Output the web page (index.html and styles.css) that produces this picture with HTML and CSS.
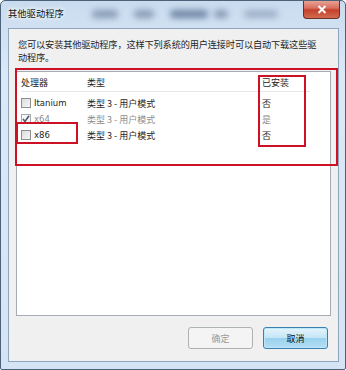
FILE: index.html
```html
<!DOCTYPE html>
<html>
<head>
<meta charset="utf-8">
<link rel="stylesheet" href="styles.css">
</head>
<body>
<div class="window">
  <div class="titlebar">
    <span class="title">其他驱动程序</span>
    <span class="blur b1"></span><span class="blur b2"></span><span class="blur b3"></span><span class="blur b4"></span><span class="blur b5"></span>
    <div class="close"><svg width="10" height="9" viewBox="0 0 10 9"><path d="M1.5 1 L8.5 8 M8.5 1 L1.5 8" stroke="#fff" stroke-width="2"/></svg></div>
  </div>
  <div class="client">
    <p class="intro">您可以安装其他驱动程序，这样下列系统的用户连接时可以自动下载这些驱动程序。</p>
    <div class="listbox">
      <div class="row head">
        <span class="c1">处理器</span><span class="c2">类型</span><span class="c3">已安装</span>
      </div>
      <div class="row">
        <span class="c1"><span class="cb"></span>Itanium</span><span class="c2">类型 3 - 用户模式</span><span class="c3">否</span>
      </div>
      <div class="row dis">
        <span class="c1"><span class="cb checked"><svg width="8" height="8" viewBox="0 0 8 8"><path d="M1 4 L3 6.5 L7 0.8" fill="none" stroke="#4a5a78" stroke-width="1.6"/></svg></span>x64</span><span class="c2">类型 3 - 用户模式</span><span class="c3">是</span>
      </div>
      <div class="row">
        <span class="c1"><span class="cb"></span>x86</span><span class="c2">类型 3 - 用户模式</span><span class="c3">否</span>
      </div>
    </div>
    <div class="buttons">
      <span class="btn disabled">确定</span>
      <span class="btn default">取消</span>
    </div>
  </div>
  <div class="mark m-big"></div>
  <div class="mark m-x86"></div>
  <div class="mark m-inst"></div>
</div>
</body>
</html>
```
FILE: styles.css
```css
html, body {
  margin: 0;
  padding: 0;
  background: #fff;
}
body {
  font-family: "Noto Sans CJK SC", "DejaVu Sans", sans-serif;
  font-size: 9px;
  color: #1e1e1e;
}
.window {
  position: relative;
  width: 344px;
  height: 368px;
  border: 1px solid #4c6279;
  border-radius: 5px 5px 2px 2px;
  background: linear-gradient(to bottom, #c9dcef 0%, #dbe8f6 20%, #d5e4f4 100%);
  display: flex;
  flex-direction: column;
  padding: 0 6px 7px 7px;
  box-sizing: border-box;
  width: 346px;
  height: 370px;
  overflow: hidden;
}
.titlebar {
  position: relative;
  height: 27px;
  flex: none;
}
.title {
  position: relative;
  display: inline-block;
  margin-top: 6px;
  font-size: 9.3px;
  line-height: 12px;
  color: #111;
  text-shadow: 0 0 4px #fff, 0 0 6px #fff;
  z-index: 2;
}
.blur {
  position: absolute;
  top: 9px;
  height: 8px;
  border-radius: 4px;
  background: #6f84a0;
  filter: blur(3px);
  opacity: 0.75;
}
.b1 { left: 84px; width: 26px; }
.b2 { left: 126px; width: 20px; }
.b3 { left: 162px; width: 38px; background: #51678a; }
.b4 { left: 206px; width: 14px; }
.b5 { left: 236px; width: 34px; opacity: 0.5; }
.close {
  position: absolute;
  right: -1px;
  top: -1px;
  width: 37px;
  height: 19px;
  border: 1px solid #6b2f2a;
  border-top: none;
  border-radius: 0 0 4px 4px;
  background: linear-gradient(to bottom, #e9a89c 0%, #d9705f 45%, #c4402d 55%, #d26b4f 100%);
  display: flex;
  align-items: center;
  justify-content: center;
  box-sizing: border-box;
}
.client {
  flex: 1;
  background: #f0f0f0;
  border: 1px solid #8fa5bd;
  display: flex;
  flex-direction: column;
  padding: 0 7px 0 7px;
}
.intro {
  margin: 9px 0 0 2px;
  line-height: 13px;
  font-size: 9.2px;
  letter-spacing: -0.15px;
  width: 306px;
}
.listbox {
  margin-top: 7px;
  height: 245px;
  background: #fff;
  border: 1px solid #a5acb5;
  box-sizing: border-box;
  padding: 0 0 0 4px;
}
.row {
  display: flex;
  height: 16px;
  align-items: center;
}
.row.head {
  height: 18px;
  margin-top: 1px;
  margin-right: 20px;
  border-bottom: 1px solid #e3e6ea;
  margin-bottom: 3px;
}
.c1 {
  width: 66px;
  display: flex;
  align-items: center;
  font-family: "DejaVu Sans", "Noto Sans CJK SC", sans-serif;
  font-size: 8.5px;
}
.head .c1 { font-family: "Noto Sans CJK SC", sans-serif; font-size: 9px; }
.c2 { width: 175px; }
.c3 { width: 40px; }
.cb {
  width: 8px;
  height: 8px;
  border: 1px solid #8e8f8f;
  background: linear-gradient(135deg, #dcdcdc, #f6f6f6);
  margin-right: 3px;
  display: inline-flex;
  align-items: center;
  justify-content: center;
  flex: none;
}
.cb.checked { border-color: #a9acaf; background: #f4f4f4; }
.dis { color: #8d8d8d; }
.buttons {
  display: flex;
  justify-content: flex-end;
  gap: 10px;
  margin-top: 11px;
  padding-right: 3px;
}
.btn {
  width: 65px;
  height: 22px;
  box-sizing: border-box;
  border-radius: 3px;
  display: flex;
  align-items: center;
  justify-content: center;
  font-size: 9px;
}
.btn.disabled {
  border: 1px solid #adb2b5;
  background: #f4f4f4;
  color: #9a9a9a;
}
.btn.default {
  border: 1px solid #3c7fb1;
  background: linear-gradient(to bottom, #e5f4fc 0%, #c4e5f6 50%, #98d1ef 51%, #b5dff4 100%);
  box-shadow: inset 0 0 0 1px #bce7fb;
  color: #111;
}
.mark {
  position: absolute;
  border: 2px solid #cc1125;
  box-sizing: border-box;
}
.m-big { left: 14px; top: 67px; width: 323px; height: 98px; }
.m-x86 { left: 15px; top: 121px; width: 62px; height: 22px; }
.m-inst { left: 257px; top: 74px; width: 48px; height: 72px; }
```
